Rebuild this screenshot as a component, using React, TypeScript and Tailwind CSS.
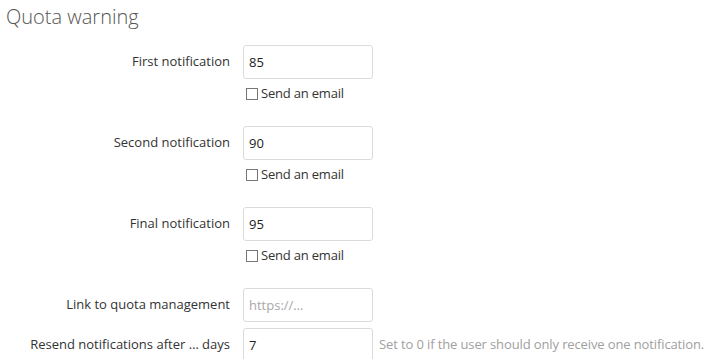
import React from "react";

type Row = {
  label: string;
  value: string;
  placeholder?: string;
  email?: boolean;
  help?: string;
};

const rows: Row[] = [
  { label: "First notification", value: "85", email: true },
  { label: "Second notification", value: "90", email: true },
  { label: "Final notification", value: "95", email: true },
  { label: "Link to quota management", value: "", placeholder: "https://…" },
  {
    label: "Resend notifications after … days",
    value: "7",
    help: "Set to 0 if the user should only receive one notification.",
  },
];

function FormRow({ row }: { row: Row }) {
  return (
    <div className="mb-[6px]">
      <div className="flex items-center">
        <label className="w-[230px] shrink-0 text-right text-[13px] text-[#333]">
          {row.label}
        </label>
        <input
          type="text"
          defaultValue={row.value}
          placeholder={row.placeholder}
          className="ml-[13px] h-[34px] w-[130px] shrink-0 rounded-[3px] border border-[#dbdbdb] bg-white px-[5px] text-[13px] text-[#222] outline-none placeholder:text-[#a8a8a8]"
        />
        {row.help && (
          <span className="ml-[6px] whitespace-nowrap text-[13px] tracking-[-0.12px] text-[#a0a0a0]">
            {row.help}
          </span>
        )}
      </div>
      {row.email && (
        <div className="h-[41px] pl-[243px] pt-[9px]">
          <label className="flex h-[12px] items-center text-[13px] tracking-[-0.2px] text-[#333]">
            <span className="mr-[3px] ml-[3px] inline-block h-[12px] w-[12px] border border-[#777] bg-white" />
            Send an email
          </label>
        </div>
      )}
    </div>
  );
}

export default function App() {
  return (
    <div
      className="min-h-screen bg-white"
      style={{ fontFamily: '"Open Sans", "Liberation Sans", sans-serif' }}
    >
      <h2 className="mt-[2px] pl-[6px] text-[20px] font-light leading-[30px] text-[#555]">
        Quota warning
      </h2>
      <div className="mt-[13px]">
        {rows.map((r) => (
          <FormRow key={r.label} row={r} />
        ))}
      </div>
    </div>
  );
}
